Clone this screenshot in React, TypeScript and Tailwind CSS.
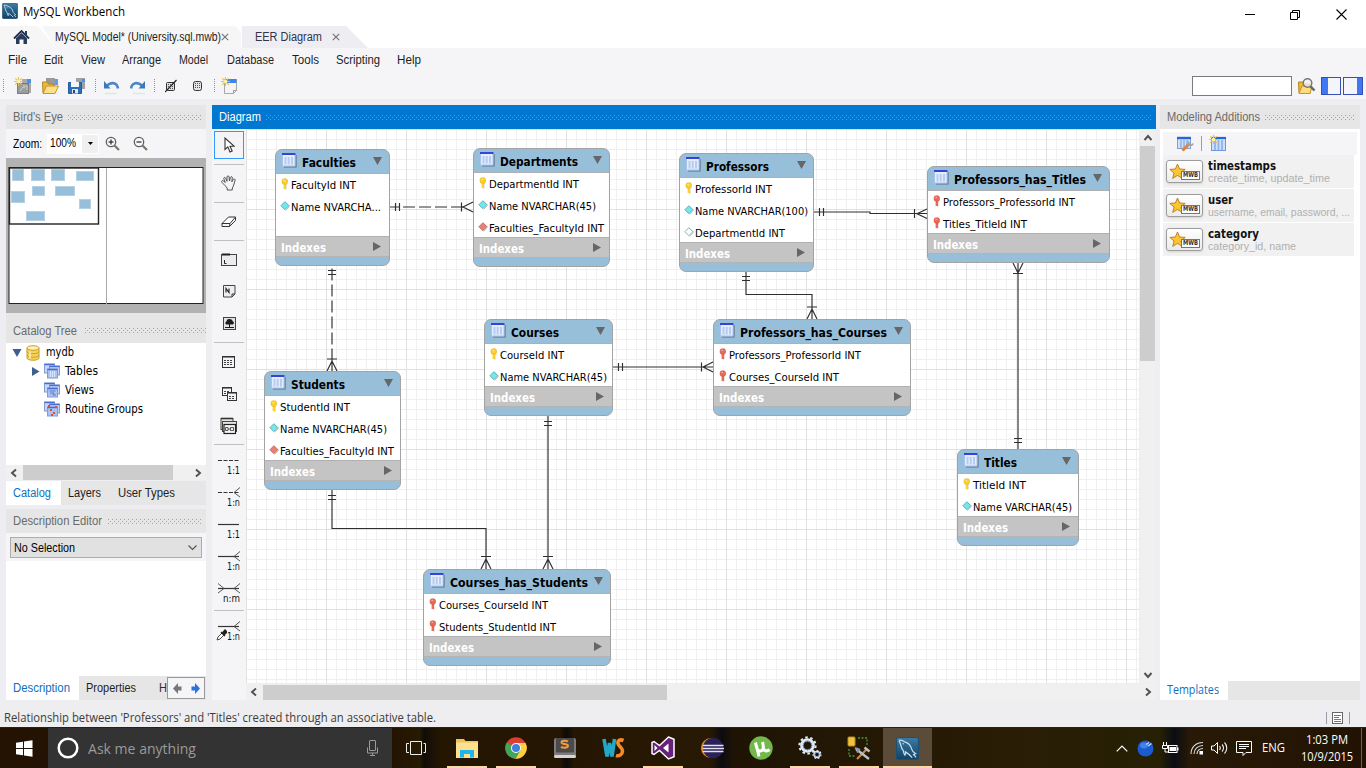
import React, { useLayoutEffect, useRef } from "react";

type Kids = { children?: React.ReactNode };

/** A single line of text that is set to an exact width. */
function Fit({ w, className = "", children }: { w: number; className?: string; children: string }) {
  const ref = useRef<HTMLSpanElement>(null);
  useLayoutEffect(() => {
    const el = ref.current;
    if (!el) return;
    el.style.transform = "none";
    const natural = el.getBoundingClientRect().width;
    if (natural > 0) el.style.transform = `scaleX(${w / natural})`;
  }, [w, children]);
  return (
    <span className={"block shrink-0 whitespace-pre " + className} style={{ width: w }}>
      <span ref={ref} className="inline-block origin-left">
        {children}
      </span>
    </span>
  );
}

function Svg({ w, h, className = "", children }: Kids & { w: number; h: number; className?: string }) {
  return (
    <svg width={w} height={h} viewBox={`0 0 ${w} ${h}`} className={"block shrink-0 " + className} fill="none">
      {children}
    </svg>
  );
}

function Grip({ id, color }: { id: string; color: string }) {
  return (
    <svg className="block h-[5px] min-w-0 flex-1" shapeRendering="crispEdges">
      <defs>
        <pattern id={id} width="4" height="4" patternUnits="userSpaceOnUse">
          <rect x="0" y="0" width="1" height="1" fill={color} />
          <rect x="2" y="2" width="1" height="1" fill={color} />
        </pattern>
      </defs>
      <rect width="100%" height="5" fill={`url(#${id})`} />
    </svg>
  );
}

function PanelHeader({ title, w, id, className = "h-6 gap-[5px] pr-[5px]" }: { title: string; w: number; id: string; className?: string }) {
  return (
    <div className={"flex shrink-0 items-center bg-[#e6e6e6] pl-[7px] text-[12px] text-[#6a6a6a] " + className}>
      <Fit w={w}>{title}</Fit>
      <Grip id={id} color="#a4a4a4" />
    </div>
  );
}

/* ---------- title bar, tabs, menus, toolbar ---------- */

function Dolphin({ size }: { size: number }) {
  return (
    <svg width={size} height={size} viewBox="0 0 24 24" className="block shrink-0" fill="none">
      <defs>
        <linearGradient id={"dol" + size} x1="0" y1="0" x2="0" y2="1">
          <stop offset="0" stopColor="#3d7ba3" />
          <stop offset="1" stopColor="#0f4267" />
        </linearGradient>
      </defs>
      <rect x="0.5" y="0.5" width="23" height="23" rx="2" fill={`url(#dol${size})`} stroke="#1c4f74" />
      <path
        d="M3 3.500c2-.8 4 0 6 1.500 4 1 6.500 4 7.500 8 .5 2 2 3.500 4 4.500l-2.200.8 2.700 3M3 3.500c.8 1.500 1.500 3 2 5 .5 2.500 1 4 2.500 5.500.5 1.500.5 3.500 1.800 5 .8-1.500.8-2.500.6-3.500 2.500 1.500 4.500 3 7 6"
        stroke="#c9dcea"
        strokeWidth="1.300"
      />
      <circle cx="7.500" cy="7" r="0.700" fill="#dce9f2" />
    </svg>
  );
}

function TitleBar() {
  return (
    <div className="flex h-[26px] shrink-0 items-start bg-white pl-[2px]">
      <div className="pt-[3px]">
        <Dolphin size={16} />
      </div>
      <div className="ml-[5px] flex h-6 flex-1 items-center font-['Open_Sans',sans-serif] text-[12px] text-black">
        <Fit w={102}>MySQL Workbench</Fit>
      </div>
      <div className="flex h-7 items-center gap-[35px] pr-[19px]">
        <Svg w={11} h={11}><path d="M1 5.500h10" stroke="#000" /></Svg>
        <Svg w={11} h={11}><path d="M.5 3.500h7v7h-7zM2.500 3.500v-2h7v7h-2" stroke="#000" /></Svg>
        <Svg w={11} h={11}><path d="M.5.5l10 10M10.500.5l-10 10" stroke="#000" strokeWidth="1.100" /></Svg>
      </div>
    </div>
  );
}

function TabClose() {
  return <Svg w={8} h={8}><path d="M.8.8l6.400 6.400M7.200.8L.8 7.200" stroke="#777" strokeWidth="1.200" /></Svg>;
}

function Tabs() {
  return (
    <div className="flex h-[22px] shrink-0 bg-white text-[12px] text-[#1e1e1e]">
      <div className="flex w-[56px] items-center bg-[#f6f6f7] pl-[13px] [clip-path:polygon(0_0,38px_0,56px_100%,0_100%)]">
        <Svg w={17} h={15}>
          <path d="M1 8.500L8.500 1 16 8.500" stroke="#22304d" strokeWidth="1.800" />
          <path d="M12 1h2v5h-2zM3 8.300L8.500 3 14 8.300V14h-3.500V9.500h-4V14H3z" fill="#2a3a5c" />
        </Svg>
      </div>
      <div className="-ml-[14px] flex w-[199px] items-center bg-[#f6f6f7] pl-[13px] [clip-path:polygon(0_0,193px_0,199px_6px,199px_100%,14px_100%)]">
        <Fit w={166}>MySQL Model* (University.sql.mwb)</Fit>
        <TabClose />
      </div>
      <div className="ml-[1px] flex w-[126px] items-center bg-[#eeeef2] pl-[13px] [clip-path:polygon(0_0,104px_0,126px_100%,0_100%)]">
        <Fit w={67} className="text-[#33334a]">EER Diagram</Fit>
        <div className="ml-[10px]"><TabClose /></div>
      </div>
    </div>
  );
}

const menus: [string, number, string][] = [
  ["File", 19, "w-[36px]"], ["Edit", 19, "w-[37px]"], ["View", 24, "w-[41px]"],
  ["Arrange", 39, "w-[57px]"], ["Model", 29, "w-[48px]"], ["Database", 47, "w-[65px]"],
  ["Tools", 27, "w-[44px]"], ["Scripting", 44, "w-[61px]"], ["Help", 24, "w-[40px]"],
];

function MenuBar() {
  return (
    <div className="flex h-6 shrink-0 items-center bg-[#f5f5f7] pl-2 text-[12px] text-[#1e1e1e]">
      {menus.map(([m, w, cell]) => <div key={m} className={cell}><Fit w={w}>{m}</Fit></div>)}
    </div>
  );
}

function Sep() {
  return <Svg w={1} h={14}><path d="M.5 0v14" stroke="#8a93a5" strokeDasharray="1 1" /></Svg>;
}

function Spark() {
  return (
    <g>
      <path d="M4.500 0v9M0 4.500h9M1.300 1.300l6.400 6.400M7.700 1.300L1.300 7.700" stroke="#efc02c" strokeWidth="1.100" />
      <circle cx="4.500" cy="4.500" r="1.700" fill="#fff3b0" />
    </g>
  );
}

function Toolbar() {
  return (
    <div className="flex h-[27px] shrink-0 items-center bg-[#f5f5f7] pl-[3px]">
      <Sep />
      <Svg w={18} h={18} className="ml-[10px]">
        <path d="M8 2h9v14H8z" fill="#a9a9a9" />
        <rect x="13" y="2" width="4" height="4" fill="#4e8fe8" />
        <rect x="3.500" y="6.500" width="11" height="10" fill="#9c9c9c" stroke="#7d7d7d" />
        <path d="M6 14l3-4 2 1M9 9h4v4" stroke="#cfcfcf" />
        <Spark />
      </Svg>
      <Svg w={17} h={18} className="ml-[10px]">
        <rect x="4" y="1" width="9" height="9" fill="#9a9a9a" />
        <rect x="13" y="2" width="3" height="6" fill="#5d9bec" />
        <path d="M.5 5h5l1 2h5v9H1z" fill="#e9b83c" stroke="#b5841c" />
        <path d="M1 16.500L4.500 9h12L13 16.500z" fill="#ffe08a" stroke="#c7952b" />
      </Svg>
      <Svg w={18} h={18} className="ml-[9px]">
        <rect x="8" y="1" width="9" height="11" fill="#a2a2a2" />
        <rect x="14" y="2" width="3" height="3" fill="#4e8fe8" />
        <path d="M.5 5.500h13v11h-13z" fill="#2c6fb5" stroke="#235c9c" />
        <rect x="3" y="5" width="8" height="5" fill="#f2f6fb" />
        <rect x="4" y="12" width="6" height="4.500" fill="#e6e6e6" />
        <rect x="5" y="13" width="2" height="3" fill="#184c87" />
      </Svg>
      <div className="ml-[9px]"><Sep /></div>
      <Svg w={17} h={18} className="ml-[7px]">
        <path d="M15 11.500C14 5.500 8.500 4.500 4 8.500" stroke="#4a86c5" strokeWidth="2.600" />
        <path d="M1 4v7.500h6.500z" fill="#3a78ba" />
        <path d="M2 16.500h12" stroke="#e4e4e8" strokeWidth="1.500" />
      </Svg>
      <Svg w={17} h={18} className="ml-[10px]">
        <path d="M1 11.500C2 5.500 7.500 4.500 12 8.500" stroke="#4a86c5" strokeWidth="2.600" />
        <path d="M15 4v7.500H8.500z" fill="#3a78ba" />
        <path d="M3 16.500h12" stroke="#e4e4e8" strokeWidth="1.500" />
      </Svg>
      <div className="ml-[7px]"><Sep /></div>
      <Svg w={12} h={14} className="ml-[10px]">
        <rect x="1.500" y="3.500" width="8" height="8" rx="1" fill="#ddd" stroke="#333" />
        <path d="M3 5.500h6M3 7.500h6M3 9.500h6" stroke="#555" strokeDasharray="1 1" />
        <path d="M0 13L11.500 1" stroke="#222" strokeWidth="1.200" />
      </Svg>
      <Svg w={10} h={12} className="ml-[16px] mt-px">
        <rect x=".5" y="1.500" width="8" height="9" rx="2" fill="#e4e4e4" stroke="#333" />
        <path d="M2 3.500h6M2 5.500h6M2 7.500h6" stroke="#555" strokeDasharray="1 1" />
      </Svg>
      <div className="ml-[11px]"><Sep /></div>
      <Svg w={17} h={18} className="ml-[6px]">
        <path d="M3.500 2.500h12v11l-3 3h-9z" fill="#f4f4f4" stroke="#a8a8a8" />
        <path d="M5 2h10.500v4H5z" fill="#3f87e6" />
        <path d="M12.500 16.500v-3h3" stroke="#9a9a9a" />
        <Spark />
      </Svg>
      <div className="flex flex-1 items-center justify-end pr-[3px]">
        <div className="h-5 w-[100px] border border-[#7a7a7a] bg-white" />
        <Svg w={18} h={18} className="ml-[6px]">
          <path d="M.5 5h5l1 2h6v9H1z" fill="#eab93c" stroke="#b5841c" />
          <path d="M1 16.500L4 9h10l-2 7.500z" fill="#ffdc7c" stroke="#c7952b" />
          <circle cx="9.500" cy="6" r="4.300" fill="#eef0f2cc" stroke="#777" strokeWidth="1.400" />
          <path d="M12.500 9.500l4 4" stroke="#666" strokeWidth="2.400" />
        </Svg>
        <Svg w={20} h={18} className="ml-[5px]">
          <rect x=".5" y=".5" width="19" height="17" fill="#f4f4fb" stroke="#3a4fb4" />
          <rect x="1" y="1" width="6" height="16" fill="#3f78f5" />
        </Svg>
        <Svg w={20} h={18} className="ml-[2px]">
          <rect x=".5" y=".5" width="19" height="17" fill="#f4f4fb" stroke="#3a4fb4" />
          <rect x="14" y="1" width="5" height="16" fill="#3f78f5" />
        </Svg>
      </div>
    </div>
  );
}

/* ---------- left column ---------- */

function Magnifier({ plus }: { plus?: boolean }) {
  return (
    <Svg w={16} h={16}>
      <circle cx="6" cy="6" r="4.700" fill="#f8f8f8" stroke="#5f5f5f" strokeWidth="1.300" />
      <path d="M3.500 6h5" stroke="#333" strokeWidth="1.300" />
      {plus && <path d="M6 3.500v5" stroke="#333" strokeWidth="1.300" />}
      <path d="M9.500 9.500l4.500 4.500" stroke="#7d7468" strokeWidth="2.200" />
    </Svg>
  );
}

const overview: [number, number, number, number][] = [
  [3, 2, 12, 12], [22, 2, 14, 12], [42, 2, 14, 12], [67, 4, 18, 10], [2, 24, 14, 12],
  [23, 19, 13, 10], [46, 19, 20, 10], [70, 32, 12, 10], [17, 44, 19, 10],
];

function BirdsEye() {
  return (
    <div className="h-[155px] shrink-0 bg-[#b2b2b2] pt-[9px] pl-[2px]">
      <Svg w={197} h={138}>
        <rect x="1" y=".5" width="194" height="136" fill="#fff" stroke="#222" />
        <path d="M98.500 1v136" stroke="#aaa" />
        {overview.map(([x, y, w, h], i) => (
          <rect key={i} x={x + 1.500} y={y + .5} width={w - 1} height={h - 1} fill="#98bfda" stroke="#b4d0e4" />
        ))}
        <rect x="1.500" y="1" width="89" height="56" stroke="#222" strokeWidth="1.400" />
      </Svg>
    </div>
  );
}

function GroupIcon({ kind }: { kind: number }) {
  return (
    <Svg w={17} h={17}>
      {[[.5, 1], [5.500, 3], [3.500, 6]].map(([x, y], i) => (
        <g key={i}>
          <rect x={x} y={y} width="10" height="9" fill={i === 2 ? "#a9c2f0" : "#c5d6f6"} stroke="#7f9cd8" />
          <path d={`M${x} ${y + .5}h10`} stroke="#4a6cd4" strokeWidth="1.400" />
        </g>
      ))}
      {kind === 0 && <path d="M6.500 8v6M8.500 8v6M10.500 8v6" stroke="#dbe7fb" />}
      {kind === 1 && <path d="M5.500 9h6M6 11h4l-1 2h3" stroke="#5a76e0" />}
      {kind === 2 && <path d="M6 9h2M9 12h2M4 5h2M11 6h2M7 14h2" stroke="#d9533a" strokeWidth="2" />}
    </Svg>
  );
}

function Chevron({ dir }: { dir: "l" | "r" | "u" | "d" }) {
  const d = { l: "M7 1.500L3 5l4 3.500", r: "M3 1.500L7 5 3 8.500", u: "M1.500 7L5 3l3.500 4", d: "M1.500 3L5 7l3.500-4" }[dir];
  return <Svg w={10} h={10}><path d={d} stroke="#505050" strokeWidth="1.900" /></Svg>;
}

function Catalog() {
  return (
    <>
      <div className="flex h-[122px] shrink-0 flex-col bg-white font-['DejaVu_Sans_Condensed','DejaVu_Sans',sans-serif] text-[11.500px] text-black">
        <div className="flex h-[19px] items-center pl-[6px]">
          <Svg w={10} h={8}><path d="M.5 0h9L5 8z" fill="#3f5f8e" /></Svg>
          <Svg w={14} h={16} className="mr-[6px] ml-[4px]">
            <path d="M1 3v10c0 3 12 3 12 0V3" fill="#f4d35a" stroke="#c79f2c" />
            <ellipse cx="7" cy="3" rx="6" ry="2.300" fill="#fdf0b0" stroke="#c79f2c" />
            <path d="M1 6.500c0 3 12 3 12 0M1 10c0 3 12 3 12 0" stroke="#c79f2c" />
            <path d="M4 6.500v7" stroke="#fff3b8" strokeWidth="1.500" />
          </Svg>
          <Fit w={28}>mydb</Fit>
        </div>
        <div className="flex h-[19px] items-center pl-[26px]">
          <Svg w={8} h={9}><path d="M0 0v9l7.500-4.500z" fill="#3f5f8e" /></Svg>
          <div className="mr-[4px] ml-[4px]"><GroupIcon kind={0} /></div>
          <Fit w={33}>Tables</Fit>
        </div>
        <div className="flex h-[19px] items-center gap-[4px] pl-[38px]">
          <GroupIcon kind={1} />
          <Fit w={29}>Views</Fit>
        </div>
        <div className="flex h-[19px] items-center gap-[4px] pl-[38px]">
          <GroupIcon kind={2} />
          <Fit w={78}>Routine Groups</Fit>
        </div>
      </div>
      <div className="flex h-[15px] shrink-0 items-center bg-[#f0f0f0] pl-[3px]">
        <Chevron dir="l" />
        <div className="ml-1 h-full w-[150px] bg-[#cdcdcd]" />
        <div className="ml-[20px]"><Chevron dir="r" /></div>
      </div>
      <div className="mt-px flex h-6 shrink-0 items-center bg-[#e6e6e6] text-[12px] text-[#1e1e1e]">
        <div className="flex h-full w-[55px] items-center bg-white pl-[7px] text-[#0e70c0]"><Fit w={38}>Catalog</Fit></div>
        <Fit w={33} className="ml-[7px]">Layers</Fit>
        <Fit w={57} className="ml-[17px]">User Types</Fit>
      </div>
    </>
  );
}

function LeftColumn() {
  return (
    <div className="flex w-[200px] shrink-0 flex-col">
      <PanelHeader title="Bird's Eye" w={50} id="g1" />
      <div className="flex h-[29px] shrink-0 items-center bg-[#f5f5f7] pl-[7px] text-[12px] text-black">
        <Fit w={29}>Zoom:</Fit>
        <div className="ml-[5px] flex h-5 w-[52px] bg-white">
          <div className="flex w-[35px] items-center pb-[2px] pl-[3px]"><Fit w={26}>100%</Fit></div>
          <div className="my-px flex w-4 items-center justify-center bg-[#f0f0f0]">
            <Svg w={5} h={3}><path d="M0 0h5L2.500 3z" fill="#000" /></Svg>
          </div>
        </div>
        <div className="ml-[6px]"><Magnifier plus /></div>
        <div className="ml-[12px]"><Magnifier /></div>
      </div>
      <BirdsEye />
      <PanelHeader title="Catalog Tree" w={64} id="g2" className="h-[30px] gap-[8px] pt-[5px]" />
      <Catalog />
      <PanelHeader title="Description Editor" w={89} id="g3" className="mt-[4px] h-6 gap-[6px] pr-[5px]" />
      <div className="flex h-[28px] shrink-0 items-center bg-[#f5f5f7] pl-1">
        <div className="flex h-[21px] w-[192px] items-center justify-between border border-[#adadad] bg-[#e1e1e1] pt-px pr-[3px] pl-[3px] text-[12px] text-black">
          <Fit w={61}>No Selection</Fit>
          <Svg w={11} h={6}><path d="M1.500 .5l4 4 4-4" stroke="#555" strokeWidth="1.200" /></Svg>
        </div>
      </div>
      <div className="h-[115px] shrink-0 bg-white" />
      <div className="flex h-6 shrink-0 items-center bg-[#e6e6e6] text-[12px] text-[#1e1e1e]">
        <div className="flex h-full w-[73px] items-center bg-white pl-[7px] text-[#0e70c0]"><Fit w={57}>Description</Fit></div>
        <Fit w={50} className="ml-[7px]">Properties</Fit>
        <div className="ml-[23px] w-[8px] text-[#3d2540]"><Fit w={8}>H</Fit></div>
        <div className="flex h-[22px] w-[38px] items-center justify-center gap-[9px] border border-[#9a9a9a] bg-[#f5f5f7]">
          <Svg w={9} h={11}><path d="M8.500 3.500v4H5V11L0 5.500 5 0v3.500z" fill="#777" /></Svg>
          <Svg w={9} h={11}><path d="M.5 3.500v4H4V11l5-5.500L4 0v3.500z" fill="#2f6fe4" /></Svg>
        </div>
      </div>
    </div>
  );
}

/* ---------- tool column ---------- */

function Slot({ className, children }: Kids & { className: string }) {
  return <div className={"flex shrink-0 items-center justify-center " + className}>{children}</div>;
}

function Rule() {
  return <div className="mx-[2px] h-px shrink-0 bg-[#c0c0c0]" />;
}

function RelTool({ label, w, dashed, left, right, picker }: { label: string; w: number; dashed?: boolean; left?: boolean; right?: boolean; picker?: boolean }) {
  return (
    <div className="flex h-8 w-[34px] shrink-0 flex-col pl-[5px]">
      <Svg w={24} h={12}>
        <path d="M1 6.500h21" stroke="#333" strokeWidth="1.200" strokeDasharray={dashed ? "4 1.500" : undefined} />
        {right && <path d="M23 1.500L17 6.500l6 4.500" stroke="#555" />}
        {left && <path d="M1 1.500l6 5-6 4.500" stroke="#555" />}
      </Svg>
      <div className="-mt-[2px] flex h-4 justify-end pr-[6px] font-['DejaVu_Sans_Condensed','DejaVu_Sans',sans-serif] text-[11px] leading-[14px] text-[#111]">
        {picker && (
          <Svg w={11} h={12} className="-mt-px">
            <path d="M1 11l1-3 4-4 2 2-4 4z" fill="#fff" stroke="#444" />
            <path d="M5 3l4 4M6 4.500L9 1l2 2-3 3z" stroke="#222" strokeWidth="1.300" fill="#222" />
          </Svg>
        )}
        <Fit w={w}>{label}</Fit>
      </div>
    </div>
  );
}

function GridIcon({ x, y, w, h }: { x: number; y: number; w: number; h: number }) {
  return (
    <>
      <rect x={x + .5} y={y + .5} width={w} height={h} fill="#f4f4f4" stroke="#333" />
      <path d={`M${x + 1} ${y + 1.500}h${w - 1}`} stroke="#888" />
      {[4.500, 6.500, 8.500].filter((r) => r < h - 1).map((r) => (
        <path key={r} d={`M${x + 2} ${y + r}h${w - 3}`} stroke="#444" strokeDasharray="2 1" />
      ))}
    </>
  );
}

function ToolColumn() {
  return (
    <div className="flex w-[34px] shrink-0 flex-col bg-[#f5f5f7]">
      <div className="mt-[2px] ml-[2px] flex h-[28px] w-[30px] shrink-0 items-center justify-center border border-[#3399ff] bg-[#f5f5f7]">
        <Svg w={11} h={16}><path d="M1 1v11.500l2.800-2.600L6 15l2.200-1L6 9.200h4z" fill="#fff" stroke="#333" strokeWidth="1.100" /></Svg>
      </div>
      <div className="h-[5px] shrink-0" />
      <Rule />
      <Slot className="h-[37px]">
        <Svg w={16} h={16} className="-mt-[2px]">
          <path d="M4 10.500L1 7.500C-.2 6 1.600 4.900 2.700 6.100L4.300 7.500 2.800 3.800c-.4-1.500 1.300-1.900 1.900-.5l1.300 3L6 2c0-1.500 2-1.500 2.100 0l.4 4 .9-3.500c.4-1.400 2.200-1 1.900.5l-.5 3.800 1.400-2.300c.9-1.100 2.300-.4 1.800 1L12.700 10c-.4 1.300-.9 2.300-1.400 3v2H6.200v-2z" fill="#f4f4f4" stroke="#444" strokeWidth=".9" />
        </Svg>
      </Slot>
      <Rule />
      <Slot className="h-[37px]">
        <Svg w={16} h={12}>
          <path d="M1 7.500L7.500 1h7L9 7.500z" fill="#fff" stroke="#333" />
          <path d="M1 7.500v3h7.500l6-6V1M9 7.500l-.5 3" stroke="#333" />
        </Svg>
      </Slot>
      <Rule />
      <Slot className="h-[37px]">
        <Svg w={16} h={14}>
          <rect x=".5" y="1.500" width="15" height="11" fill="#ececec" stroke="#444" />
          <path d="M1 1.500h8" stroke="#222" strokeWidth="2" />
          <path d="M3.500 7v3.500h2" stroke="#222" />
        </Svg>
      </Slot>
      <Slot className="h-[27px]">
        <Svg w={13} h={13}>
          <path d="M.5.5h11.500v8.500l-3 3H.5z" fill="#eee" stroke="#444" />
          <path d="M9 12V9h3" stroke="#333" />
          <path d="M3 7.500V3.500l3 4v-4" stroke="#222" strokeWidth="1.100" />
        </Svg>
      </Slot>
      <Slot className="h-[37px]">
        <Svg w={13} h={13}>
          <rect x=".5" y=".5" width="12" height="12" fill="#e2e2e2" stroke="#444" />
          <path d="M6.500 2C4 2 3.500 3.500 3.800 4.200 2 4.500 1.700 7.500 4 7.500h2V10H2v1h9v-1H7V7.500h2c2.500 0 2.500-3 .5-3.300C9.500 3 8.500 2 6.500 2z" fill="#1a1a1a" />
        </Svg>
      </Slot>
      <Rule />
      <Slot className="h-[37px]"><Svg w={14} h={12}><GridIcon x={0} y={0} w={12} h={11} /></Svg></Slot>
      <Slot className="h-[27px]">
        <Svg w={15} h={14}><GridIcon x={0} y={0} w={9} h={8} /><GridIcon x={5} y={5} w={9} h={8} /></Svg>
      </Slot>
      <Slot className="h-[37px]">
        <Svg w={18} h={18}>
          <rect x="1" y="1.500" width="12" height="11" fill="#e6e6e6" stroke="#444" />
          <path d="M1 1.500h12" stroke="#333" strokeWidth="1.600" />
          <rect x="2.500" y="4.500" width="14" height="10" fill="#e6e6e6" stroke="#444" />
          <rect x="4" y="7.500" width="11.500" height="9" fill="#f6f6f6" stroke="#222" strokeWidth="1.200" />
          <path d="M5.500 10.500h2.500v3H5.500zM10.500 10.500h3v3h-3zM8 12h2.500" stroke="#444" strokeWidth=".9" />
        </Svg>
      </Slot>
      <Rule />
      <div className="h-[9px] shrink-0" />
      <RelTool label="1:1" w={13} dashed />
      <RelTool label="1:n" w={13} dashed right />
      <RelTool label="1:1" w={13} />
      <RelTool label="1:n" w={13} right />
      <RelTool label="n:m" w={17} left right />
      <div className="-mt-[4px]"><Rule /></div>
      <div className="h-[9px] shrink-0" />
      <RelTool label="1:n" w={13} right picker />
    </div>
  );
}

/* ---------- diagram ---------- */

type Mark = "pk" | "fpk" | "col" | "fk" | "null";
type Table = {
  box: string; name: string; nw: number;
  cols: [Mark, string, number][];
};

const tables: Table[] = [
  { box: "left-[29px] top-[20px] w-[115px] h-[117px]", name: "Faculties", nw: 54, cols: [["pk", "FacultyId INT", 65], ["col", "Name NVARCHA...", 90]] },
  { box: "left-[227px] top-[19px] w-[137px] h-[119px]", name: "Departments", nw: 78, cols: [["pk", "DepartmentId INT", 90], ["col", "Name NVARCHAR(45)", 107], ["fk", "Faculties_FacultyId INT", 115]] },
  { box: "left-[433px] top-[24px] w-[135px] h-[119px]", name: "Professors", nw: 63, cols: [["pk", "ProfessorId INT", 77], ["col", "Name NVARCHAR(100)", 113], ["null", "DepartmentId INT", 90]] },
  { box: "left-[681px] top-[37px] w-[183px] h-[97px]", name: "Professors_has_Titles", nw: 132, cols: [["fpk", "Professors_ProfessorId INT", 132], ["fpk", "Titles_TitleId INT", 84]] },
  { box: "left-[238px] top-[190px] w-[129px] h-[97px]", name: "Courses", nw: 48, cols: [["pk", "CourseId INT", 64], ["col", "Name NVARCHAR(45)", 107]] },
  { box: "left-[467px] top-[190px] w-[198px] h-[97px]", name: "Professors_has_Courses", nw: 147, cols: [["fpk", "Professors_ProfessorId INT", 132], ["fpk", "Courses_CourseId INT", 110]] },
  { box: "left-[18px] top-[242px] w-[137px] h-[119px]", name: "Students", nw: 54, cols: [["pk", "StudentId INT", 70], ["col", "Name NVARCHAR(45)", 107], ["fk", "Faculties_FacultyId INT", 114]] },
  { box: "left-[711px] top-[320px] w-[122px] h-[97px]", name: "Titles", nw: 33, cols: [["pk", "TitleId INT", 53], ["col", "Name VARCHAR(45)", 99]] },
  { box: "left-[177px] top-[440px] w-[188px] h-[97px]", name: "Courses_has_Students", nw: 138, cols: [["fpk", "Courses_CourseId INT", 109], ["fpk", "Students_StudentId INT", 117]] },
];

function MarkIcon({ mark }: { mark: Mark }) {
  if (mark === "pk" || mark === "fpk") {
    const [f, s] = mark === "pk" ? ["#fdd328", "#e3ac08"] : ["#ec6a55", "#cf5341"];
    return (
      <Svg w={10} h={12}>
        <path d="M5.700 6v5.500" stroke="#bbb" strokeWidth="1.400" />
        <path d="M4.800 5v6" stroke={f} strokeWidth="2.400" />
        <rect x="2.100" y=".8" width="5.400" height="5.400" rx="2" fill={f} stroke={s} strokeWidth=".6" />
        <path d="M3.500 2.300h1.600" stroke="#fff" strokeOpacity=".6" />
      </Svg>
    );
  }
  const fill = mark === "col" ? "#6fe9ee" : mark === "fk" ? "#e98075" : "#fff";
  const edge = mark === "fk" ? "#b9605a" : "#4fa3ab";
  return (
    <Svg w={10} h={12}>
      <path d="M5.600 2.400L9.600 6.400l-4 4" stroke="#c4c4c4" />
      <path d="M4.900 1.700L8.900 5.700 4.900 9.700.9 5.700z" fill={fill} stroke={edge} strokeWidth=".8" />
    </Svg>
  );
}

function TableNode({ t }: { t: Table }) {
  return (
    <div className={"absolute flex flex-col overflow-hidden rounded-[7px] border border-[#a3a3a3] bg-[#98bfda] " + t.box}>
      <div className="flex h-[23px] shrink-0 items-center pt-px pr-[7px] pl-[6px]">
        <Svg w={15} h={15} className="-mt-[3px]">
          <path d="M14 2v12H2" stroke="#5f7083" strokeWidth="1.200" />
          <rect x=".5" y=".5" width="12.500" height="12.500" fill="#e3edfc" stroke="#a9c2ee" />
          <path d="M0 1h13.500" stroke="#3542dc" strokeWidth="2" />
          <path d="M3.500 4v7.500M6.700 4v7.500M10 4v7.500" stroke="#b4ccf1" strokeWidth="2" />
        </Svg>
        <Fit w={t.nw} className="ml-[5px] pt-[2px] font-['DejaVu_Sans_Condensed','DejaVu_Sans',sans-serif] text-[13px] leading-[20px] font-bold text-black">{t.name}</Fit>
        <Svg w={9} h={8} className="-mt-[3px] ml-auto"><path d="M0 0h9L4.500 8z" fill="#666" /></Svg>
      </div>
      <div className="-mx-px flex min-h-0 flex-1 flex-col border-x border-t border-[#8c8c8c] border-t-[#b0b0b0] bg-white">
        {t.cols.map(([mark, text, w]) => (
          <div key={text} className="flex h-[22px] shrink-0 items-center pl-[4px]">
            <div className="-mt-[3px] mr-px"><MarkIcon mark={mark} /></div>
            <Fit w={w} className="pt-[2px] font-['DejaVu_Sans_Condensed','DejaVu_Sans',sans-serif] text-[11px] leading-[16px] text-black">{text}</Fit>
          </div>
        ))}
      </div>
      <div className="flex h-[21px] shrink-0 items-center justify-between border-y border-t-[#b0b0b0] border-b-[#b4b4b4] bg-[#c4c4c4] pr-[8px] pl-[5px]">
        <Fit w={45} className="pt-[2px] font-['DejaVu_Sans_Condensed','DejaVu_Sans',sans-serif] text-[11.500px] leading-[16px] font-bold text-white">Indexes</Fit>
        <Svg w={8} h={9}><path d="M0 0v9l8-4.500z" fill="#666" /></Svg>
      </div>
      <div className="h-[8px] shrink-0" />
    </div>
  );
}

function Links() {
  return (
    <svg width="893" height="554" viewBox="246 129 893 554" className="absolute top-0 left-0" fill="none" stroke="#2e2e2e" strokeWidth="1.150">
      <path d="M390 207h10M403 207h60" strokeDasharray="12 4" />
      <path d="M395.500 203v8M399.500 203v8M461.500 202.500v9M473 202l-10 5 10 5" />
      <path d="M332 268.500V359" strokeDasharray="12 4" />
      <path d="M332 359v12M328 270.500h8M328 274.500h8M327 359h10M327 371l5-10 5 10" />
      <path d="M814 212h56v1.500h57M819.500 208v8M823.500 208v8M914.500 209v9M927 209l-10 4.700 10 4.700" />
      <path d="M746 272v22.500h66V319M742 276.500h8M742 280.500h8M807 307h10M807 319l5-10 5 10" />
      <path d="M613 367h100M618.500 363v8M622.500 363v8M701.500 362.500v9M713 362l-10 5 10 5" />
      <path d="M548 416v153M544 421.500h8M544 425.500h8M543 556.500h10M543 569l5-10 5 10" />
      <path d="M332 490v38.500h154V569M328 495.500h8M328 499.500h8M481 556.500h10M481 569l5-10 5 10" />
      <path d="M1018 263v186M1013 263l5 10 5-10M1013 273.500h10M1014 438.500h8M1014 442.500h8" />
    </svg>
  );
}

function Canvas() {
  return (
    <div className="relative h-[554px] w-[893px] shrink-0 overflow-hidden bg-white">
      <svg width="893" height="554" className="absolute top-0 left-0" shapeRendering="crispEdges">
        <defs>
          <pattern id="minor" width="10" height="10" patternUnits="userSpaceOnUse">
            <path d="M.5 0v10M0 .5h10" stroke="#f0f0f0" />
          </pattern>
          <pattern id="major" width="80" height="80" patternUnits="userSpaceOnUse">
            <path d="M.5 0v80M0 .5h80" stroke="#e1e1e1" />
          </pattern>
        </defs>
        <rect width="893" height="554" fill="url(#minor)" />
        <rect width="893" height="554" fill="url(#major)" />
      </svg>
      <Links />
      {tables.map((t) => <TableNode key={t.name} t={t} />)}
    </div>
  );
}

function DiagramPanel() {
  return (
    <div className="ml-[6px] flex w-[944px] shrink-0 flex-col">
      <div className="flex h-6 shrink-0 items-center gap-[5px] bg-[#0077d1] pr-[5px] pl-[7px] text-[12px] text-white">
        <Fit w={42}>Diagram</Fit>
        <Grip id="g4" color="#4aa3e6" />
      </div>
      <div className="flex h-[571px]">
        <ToolColumn />
        <div className="flex w-[910px] shrink-0 flex-col">
          <div className="flex h-[554px]">
            <Canvas />
            <div className="ml-px flex w-[15px] flex-col items-center bg-[#f0f0f0]">
              <div className="flex h-[17px] items-center"><Chevron dir="u" /></div>
              <div className="h-[215px] w-full bg-[#cdcdcd]" />
              <div className="mt-auto flex h-[17px] items-center"><Chevron dir="d" /></div>
            </div>
          </div>
          <div className="mt-px flex h-4 items-center bg-[#f0f0f0] pl-[3px]">
            <Chevron dir="l" />
            <div className="ml-1 h-[15px] w-[404px] bg-[#cdcdcd]" />
            <div className="mr-[3px] ml-auto"><Chevron dir="r" /></div>
          </div>
        </div>
      </div>
    </div>
  );
}

/* ---------- right column ---------- */

function Addition({ title, tw, sub, sw }: { title: string; tw: number; sub: string; sw: number }) {
  return (
    <div className="mb-px flex h-[33px] w-[191px] shrink-0 items-center bg-[#f1f1f1] pl-[3px]">
      <div className="flex h-[23px] w-[37px] shrink-0 items-center justify-center rounded-[3px] border border-[#9c9c9c] bg-gradient-to-b from-white to-[#ebebeb] shadow-sm">
        <svg width="17" height="18" viewBox="0 0 17 18" className="-mr-[5px] block shrink-0">
          <path d="M8.500 1l2.100 5 5.600.4-4.300 3.600 1.400 5.400-4.800-3-4.800 3L5.100 10 .8 6.400l5.600-.4z" fill="#fcc533" stroke="#b8791a" strokeWidth=".9" />
        </svg>
        <div className="relative mt-[7px] flex h-[9px] w-[19px] shrink-0 items-center justify-center border border-[#777] bg-white">
          <Fit w={15} className="font-['DejaVu_Sans_Condensed','DejaVu_Sans',sans-serif] text-[7px] leading-[7px] font-bold text-[#333]">MWB</Fit>
        </div>
      </div>
      <div className="ml-[5px] flex flex-col">
        <Fit w={tw} className="font-['DejaVu_Sans_Condensed','DejaVu_Sans',sans-serif] text-[12px] leading-[12px] font-bold text-[#111]">{title}</Fit>
        <Fit w={sw} className="text-[11px] leading-[12px] text-[#b0b0b0]">{sub}</Fit>
      </div>
    </div>
  );
}

function RightColumn() {
  return (
    <div className="ml-[4px] flex w-[200px] shrink-0 flex-col">
      <PanelHeader title="Modeling Additions" w={93} id="g5" />
      <div className="flex h-[552px] shrink-0 flex-col bg-white pt-[3px] pl-[3px]">
        <div className="flex h-[23px] w-[194px] shrink-0 items-center bg-[#f5f5f7] pl-[14px]">
          <Svg w={17} h={16}>
            <rect x=".5" y="1.500" width="13" height="11" fill="#cfe2fb" stroke="#7ba3e2" />
            <path d="M0 2h14" stroke="#2468d8" strokeWidth="2.400" />
            <path d="M4 4v8M7 4v8M10 4v8" stroke="#86aee8" strokeWidth="1.400" />
            <path d="M5.500 14.500l6-6" stroke="#ef7d2c" strokeWidth="3" />
            <path d="M11 10l2.500-2.500M12 5.500a2.300 2.300 0 1 0 4 2" stroke="#a2a2a2" strokeWidth="1.700" />
          </Svg>
          <div className="mx-[7px] h-[15px] w-px bg-[#8ba0bd]" />
          <Svg w={18} h={17}>
            <rect x="2.500" y="2.500" width="14" height="13" fill="#cfe0fa" stroke="#6f97dc" />
            <path d="M2 3h15" stroke="#2468d8" strokeWidth="2.200" />
            <path d="M6 5v10M9.500 5v10M13 5v10" stroke="#8fb3ea" strokeWidth="1.800" />
            <Spark />
          </Svg>
        </div>
        <Addition title="timestamps" tw={68} sub="create_time, update_time" sw={122} />
        <Addition title="user" tw={25} sub="username, email, password, ..." sw={142} />
        <Addition title="category" tw={51} sub="category_id, name" sw={88} />
      </div>
      <div className="flex h-[19px] shrink-0 bg-[#e6e6e6] text-[12px]">
        <div className="flex w-[68px] items-center bg-white pb-px pl-[7px] text-[#0e70c0]">
          <Fit w={52} className="font-['Open_Sans',sans-serif]">Templates</Fit>
        </div>
      </div>
    </div>
  );
}

function StatusBar() {
  return (
    <div className="flex h-[28px] shrink-0 items-center border-b border-[#222] bg-[#eeeef0] pt-[9px] pr-[16px] pl-1 font-['Open_Sans',sans-serif] text-[12px] text-[#3c3c3c]">
      <Fit w={432}>Relationship between 'Professors' and 'Titles' created through an associative table.</Fit>
      <div className="ml-auto flex items-center gap-1">
        <div className="h-[12px] w-px bg-[#9a9aaa]" />
        <Svg w={14} h={13}>
          <rect x="1.500" y=".5" width="10" height="11" fill="#fff" stroke="#666" />
          <path d="M3 3.500h7M3 5.500h5M3 7.500h7M3 9.500h7" stroke="#777" />
        </Svg>
        <div className="h-[12px] w-px bg-[#9a9aaa]" />
      </div>
    </div>
  );
}

/* ---------- taskbar ---------- */

function AppButton({ open, active, children }: Kids & { open?: boolean; active?: boolean }) {
  return (
    <div className={"flex h-10 w-[49px] shrink-0 flex-col items-center " + (active ? "bg-[#5a4c38]" : "")}>
      <div className="flex h-[38px] items-center pt-[2px]">{children}</div>
      {open && <div className={"h-[2px] bg-[#fdd7ab] " + (active ? "w-full" : "w-10")} />}
    </div>
  );
}

function Gear({ cx, cy, r, n }: { cx: number; cy: number; r: number; n: number }) {
  return (
    <g>
      <circle cx={cx} cy={cy} r={r} stroke="#dfe9f5" strokeWidth={r * 0.45} />
      <circle cx={cx} cy={cy} r={r * 1.350} stroke="#dfe9f5" strokeWidth={r * 0.35} strokeDasharray={`${(r * 1.350 * Math.PI) / n} ${(r * 1.350 * Math.PI) / n}`} />
      <circle cx={cx} cy={cy} r={r * 0.720} stroke="#86a9d2" strokeWidth="1" />
    </g>
  );
}

function Taskbar() {
  return (
    <div className="flex h-10 shrink-0 bg-[linear-gradient(90deg,#241302_0px,#241302_392px,#261b03_420px,#120c08_424px,#241702_440px,#241602_560px,#0d0908_566px,#241602_574px,#281904_710px,#0c0b10_722px,#1f1404_734px,#261a05_930px,#2a1d06_1000px,#262004_1160px,#0b0d15_1174px,#281a07_1190px,#221203_1366px)]">
      <div className="flex w-12 items-center justify-center">
        <Svg w={17} h={17}><path d="M0 2.700L7 1.700V8H0zM8 1.500L16.500.3V8H8zM0 9h7v6.300l-7-1zM8 9h8.500v7.700L8 15.500z" fill="#fff" /></Svg>
      </div>
      <div className="flex w-[344px] items-center bg-[#333] pr-[13px] pl-[9px]">
        <Svg w={22} h={22}>
          <circle cx="11" cy="11" r="9.300" stroke="#fff" strokeWidth="2.500" />
        </Svg>
        <Fit w={108} className="ml-[9px] pt-px font-['Open_Sans',sans-serif] text-[14.500px] text-[#9a9a9a]">Ask me anything</Fit>
        <Svg w={13} h={17} className="ml-auto">
          <rect x="3.500" y=".5" width="6" height="10" rx=".5" stroke="#9a9a9a" />
          <path d="M1.500 7.500v5.500h10V7.500M6.500 13v3M4 15.500h5" stroke="#9a9a9a" />
        </Svg>
      </div>
      <div className="flex w-[50px] items-center justify-center pr-[2px]">
        <Svg w={21} h={15}><path d="M4.500.5h11v13h-11zM3 2.500H.5v9H3M17.500 2.500H19.500v9H17.500" stroke="#eee" /></Svg>
      </div>
      <AppButton open>
        <Svg w={22} h={20}>
          <path d="M0 1h8l1.500 2H22v17H0z" fill="#eec25c" />
          <path d="M0 4.500h22V20H0z" fill="#fde18f" />
          <path d="M4 19.500V12h14v7.500h-4V16H8v3.500z" fill="#20b4ea" />
        </Svg>
      </AppButton>
      <AppButton open>
        <Svg w={22} h={22}>
          <circle cx="11" cy="11" r="10.700" fill="#dd4030" />
          <path d="M11 11L1.700 5.600A10.700 10.700 0 0 0 10.500 21.700L15.500 13.600z" fill="#3fa757" />
          <path d="M11 6h9.500A10.700 10.700 0 0 1 10.500 21.700L15.500 13.600z" fill="#fdd23e" />
          <circle cx="11" cy="11" r="5" fill="#fff" />
          <circle cx="11" cy="11" r="4" fill="#3f80e0" />
        </Svg>
      </AppButton>
      <AppButton>
        <Svg w={24} h={22}>
          <rect x="1" y="1" width="22" height="19.500" rx="2" fill="#7c7c7c" />
          <rect x="1" y="18" width="22" height="3" rx="1.500" fill="#d6d6d6" />
          <rect x="3" y="1" width="18" height="14.500" rx="1" fill="#4a4a4a" />
          <path d="M15 4.500c-2-1.200-6.500-1-6.500 1s6.500 1.200 6.500 3.300-4.800 2.500-7 1" stroke="#f59a3c" strokeWidth="2" />
        </Svg>
      </AppButton>
      <AppButton>
        <Svg w={23} h={20}>
          <path d="M2 1l3 17.500L7.500 5 10 18.500 12.500 1" stroke="#23a9c7" strokeWidth="3.600" />
          <path d="M21.500 2.500c-3.500-1.500-6 0-5.500 3s4.500 4 4.500 7.500-3.500 5.500-6.500 4.500" stroke="#f28a2c" strokeWidth="3.600" />
        </Svg>
      </AppButton>
      <AppButton open>
        <Svg w={24} h={24}>
          <path d="M17.500 1L23 3.200v17.600L17.500 23 8.500 14.500 3 18.500 1 17.500v-11l2-1 5.500 4z" fill="#68217a" stroke="#fff" strokeWidth="1.500" />
          <path d="M17.500 7.500v9L12 12zM3.500 9v6l3-3z" fill="#fff" />
        </Svg>
      </AppButton>
      <AppButton>
        <Svg w={24} h={22}>
          <circle cx="11" cy="11" r="10" fill="#f0902a" />
          <circle cx="13" cy="11" r="10.300" fill="#2a2157" />
          <path d="M3 8.500h20.500M2.500 11.500h21.500M3 14.500h20.500" stroke="#e3e0f2" strokeWidth="1.700" />
        </Svg>
      </AppButton>
      <AppButton>
        <Svg w={24} h={24}>
          <circle cx="12" cy="12" r="11.700" fill="#72b84a" />
          <path d="M6.500 6.500c1 3 .5 9 5 8.500 3.500-.5 3.200-4.500 2-9M14 11.500c1 3.500 3.500 4.500 6.500 2M7.500 10l2.500 10.500" stroke="#fff" strokeWidth="3" />
        </Svg>
      </AppButton>
      <AppButton open>
        <Svg w={24} h={24}><Gear cx={9.500} cy={9.500} r={6} n={10} /><Gear cx={19} cy={18.500} r={3} n={7} /></Svg>
      </AppButton>
      <AppButton open>
        <Svg w={24} h={24}>
          <rect x="1" y="1" width="7" height="9" rx="1" fill="#f1c343" stroke="#c18b16" />
          <path d="M11 2h9v8M2 13v7h6" stroke="#3d9a3a" strokeWidth="1.300" strokeDasharray="2 1.500" />
          <path d="M10 23l10-10" stroke="#c98b3b" strokeWidth="2.200" />
          <path d="M9 13l13 10M17.500 11.500l5 4" stroke="#b9c3cf" strokeWidth="2.400" />
          <path d="M8 12l4 1.500-2 3" stroke="#8d98a6" strokeWidth="2" />
        </Svg>
      </AppButton>
      <AppButton open active><Dolphin size={23} /></AppButton>
      <div className="flex flex-1 items-center justify-end pr-1 text-white">
        <Svg w={12} h={7}><path d="M.7 6.300L6 1l5.300 5.300" stroke="#fff" strokeWidth="1.200" /></Svg>
        <Svg w={17} h={17} className="ml-[9px]">
          <circle cx="8.500" cy="8.500" r="8" fill="#1b5bd0" />
          <ellipse cx="7" cy="5.500" rx="4" ry="3" fill="#5d9bff" fillOpacity=".6" />
          <path d="M9 4.500L12 2.500M11 6l3.500-2.500" stroke="#c5d8f5" strokeWidth="1.300" />
        </Svg>
        <Svg w={17} h={13} className="ml-[8px]">
          <path d="M1.500 0v3M4.500 0v3M.5 3.500h5v3h-5zM3 6.500V10h3" stroke="#fff" />
          <rect x="6.500" y="3.500" width="8.500" height="7" stroke="#fff" />
          <path d="M7.500 5h6.500v4H7.500zM15 5.500h1.500v3H15z" fill="#fff" />
        </Svg>
        <Svg w={14} h={14} className="ml-[11px]">
          <path d="M1 13C1 6 6 1.500 13 1.500M4 13c0-5 4-8.500 9-8.500M7 13c0-3.500 3-5.500 6-5.500" stroke="#ddd" strokeWidth="1.100" />
          <rect x="9.500" y="10" width="3.500" height="3.500" fill="#fff" />
        </Svg>
        <Svg w={18} h={14} className="ml-[7px]">
          <path d="M.5 5h2.500l3.500-3.500v11L3 9H.5z" stroke="#fff" />
          <path d="M8.500 5c1 1.200 1 2.800 0 4M11 3.500c2 2 2 5 0 7M13.500 1.500c3 3 3 8 0 11" stroke="#eee" strokeWidth="1.100" />
        </Svg>
        <Svg w={17} h={15} className="ml-[7px]">
          <path d="M.5.5h15v11H10l-3 3v-3H.5zM3 3.500h10M3 5.500h10M3 7.500h7" stroke="#fff" />
        </Svg>
        <Fit w={23} className="ml-[9px] font-['Open_Sans',sans-serif] text-[12px]">ENG</Fit>
        <div className="ml-[15px] flex w-[54px] flex-col items-center font-['Open_Sans',sans-serif] text-[12px] leading-[17px]">
          <Fit w={42}>1:03 PM</Fit>
          <Fit w={52}>10/9/2015</Fit>
        </div>
        <div className="ml-[7px] h-10 w-px bg-[#6d6355]" />
      </div>
    </div>
  );
}

export default function App() {
  return (
    <div className="flex h-[768px] w-[1366px] flex-col overflow-hidden bg-[#eeeef2] font-['Liberation_Sans',sans-serif]">
      <TitleBar />
      <Tabs />
      <MenuBar />
      <Toolbar />
      <div className="mt-[6px] flex h-[595px] shrink-0 pl-[6px]">
        <LeftColumn />
        <DiagramPanel />
        <RightColumn />
      </div>
      <StatusBar />
      <Taskbar />
    </div>
  );
}
